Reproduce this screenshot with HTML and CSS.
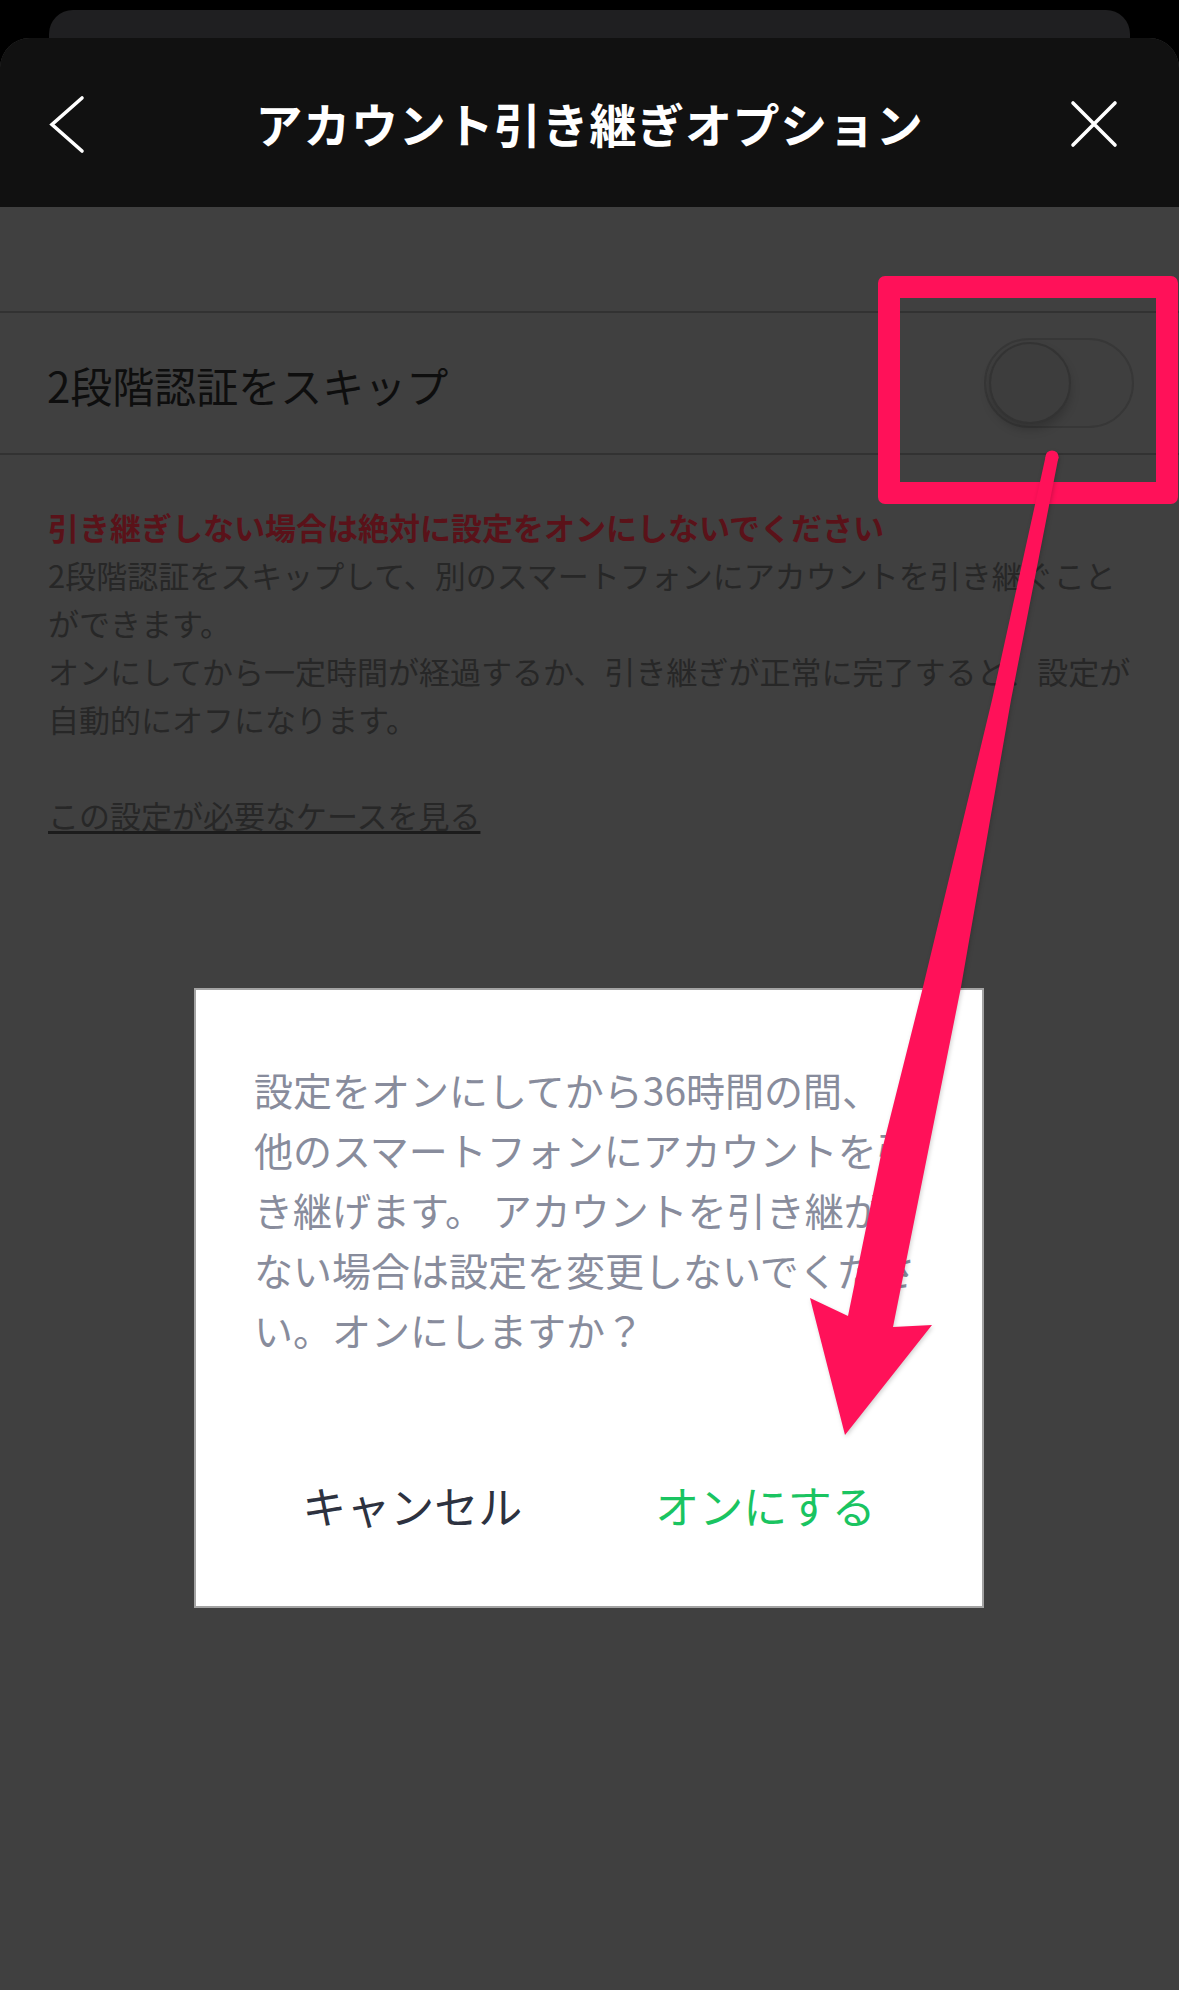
FILE: index.html
```html
<!DOCTYPE html>
<html lang="ja">
<head>
<meta charset="utf-8">
<title>アカウント引き継ぎオプション</title>
<link rel="stylesheet" href="styles.css">
</head>
<body>
  <div class="back-card"></div>

  <div class="sheet">
    <header class="nav">
      <button class="nav-btn nav-back" aria-label="戻る">
        <svg width="40" height="64" viewBox="0 0 40 64"><polyline points="34,6 4,32.5 34,59" fill="none" stroke="#fff" stroke-width="3.6" stroke-linecap="round" stroke-linejoin="miter"/></svg>
      </button>
      <h1 class="nav-title">アカウント引き継ぎオプション</h1>
      <button class="nav-btn nav-close" aria-label="閉じる">
        <svg width="50" height="50" viewBox="0 0 50 50"><path d="M4 4 L46 46 M46 4 L4 46" fill="none" stroke="#fff" stroke-width="3.6" stroke-linecap="round"/></svg>
      </button>
    </header>

    <main class="content">
      <div class="setting-row">
        <span class="setting-label">2段階認証をスキップ</span>
        <span class="switch"><span class="switch-knob"></span></span>
      </div>

      <div class="notes">
        <p class="notes-warn">引き継ぎしない場合は絶対に設定をオンにしないでください</p>
        <p class="notes-body">2段階認証をスキップして、別のスマートフォンにアカウントを引き継ぐこと<br>ができます。<br>オンにしてから一定時間が経過するか、引き継ぎが正常に完了すると、設定が<br>自動的にオフになります。</p>
        <a class="notes-link" href="#">この設定が必要なケースを見る</a>
      </div>
    </main>
  </div>

  <div class="dialog" role="dialog">
    <p class="dialog-text">設定をオンにしてから36時間の間、<br>他のスマートフォンにアカウントを引<br>き継げます。 アカウントを引き継が<br>ない場合は設定を変更しないでくださ<br>い。オンにしますか？</p>
    <div class="dialog-actions">
      <button class="dialog-btn dialog-cancel">キャンセル</button>
      <button class="dialog-btn dialog-ok">オンにする</button>
    </div>
  </div>

  <div class="callout-box"></div>
  <svg class="callout-arrow" width="1179" height="1990" viewBox="0 0 1179 1990">
    <circle cx="1052" cy="457" r="6.6" fill="#ff1159"/>
    <polygon fill="#ff1159" points="1045.5,457 992,700 923,987 882,1150 848,1316 810,1298 845,1435 932,1325 893,1327 961,987 1011,700 1058.5,457"/>
  </svg>
</body>
</html>
```

FILE: styles.css
```css
html, body {
  margin: 0;
  padding: 0;
}

body {
  position: relative;
  width: 1179px;
  height: 1990px;
  overflow: hidden;
  background: #000;
  font-family: "Noto Sans CJK JP", "Noto Sans", sans-serif;
}

p { margin: 0; }

/* stacked sheet peeking from behind */
.back-card {
  height: 28px;
  margin: 10px 49px 0;
  background: #1f1f21;
  border-radius: 24px 24px 0 0;
}

.sheet {
  height: 1952px;
  background: #404040;
  border-radius: 30px 30px 0 0;
  overflow: hidden;
}

/* navigation bar */
.nav {
  height: 169px;
  background: #111111;
  display: grid;
  grid-template-columns: 1fr auto 1fr;
  align-items: center;
  padding: 0 48px;
}

.nav-btn {
  border: 0;
  padding: 0;
  background: none;
  display: flex;
}

.nav-back { justify-self: start; margin-top: 2px; }
.nav-close { justify-self: end; margin: 3px 12px 0 0; }

.nav-title {
  margin: 0;
  color: #fff;
  font-size: 47px;
  font-weight: 700;
  line-height: 1;
  letter-spacing: 0.7px;
  white-space: nowrap;
}

/* settings */
.content {
  padding-top: 104px;
}

.setting-row {
  box-sizing: border-box;
  height: 144px;
  border-top: 2px solid #323232;
  border-bottom: 2px solid #323232;
  display: flex;
  align-items: center;
  justify-content: space-between;
  padding: 0 45px 0 47px;
}

.setting-label {
  font-size: 42px;
  color: #0e0e0e;
  margin-top: 2px;
}

.switch {
  box-sizing: border-box;
  width: 150px;
  height: 90px;
  border-radius: 45px;
  border: 2px solid #373737;
  background: #3f3f3f;
  display: flex;
  align-items: center;
  padding: 0 3px;
}

.switch-knob {
  box-sizing: border-box;
  width: 82px;
  height: 82px;
  border-radius: 50%;
  background: #3d3d3d;
  border: 2px solid #333;
  box-shadow: 0 6px 10px rgba(0, 0, 0, 0.18);
}

.notes {
  padding: 48px 48px 0;
  font-size: 31px;
  line-height: 48px;
  color: #272727;
}

.notes-warn {
  color: #5a1219;
  font-weight: 700;
}

.notes-body {
  white-space: nowrap;
}

.notes-link {
  display: inline-block;
  margin-top: 48px;
  color: #272727;
  text-decoration: underline;
  text-decoration-color: #1c1c1c;
  text-decoration-thickness: 3px;
  text-underline-offset: 3px;
}

/* confirmation dialog */
.dialog {
  position: absolute;
  left: 194px;
  top: 988px;
  box-sizing: border-box;
  width: 790px;
  height: 620px;
  background: #fff;
  border: 2px solid #a3a3a3;
  padding: 69px 40px 0 58px;
}

.dialog-text {
  font-size: 39px;
  line-height: 60px;
  color: #888c9c;
  white-space: nowrap;
}

.dialog-actions {
  margin: 96px 0 0 -58px;
  width: 786px;
  display: flex;
  justify-content: center;
  gap: 133px;
}

.dialog-btn {
  border: 0;
  background: none;
  padding: 0;
  font-family: inherit;
  font-size: 44px;
  line-height: 100px;
  height: 100px;
}

.dialog-cancel { color: #2d3240; }
.dialog-ok { color: #1ac461; }

/* annotation overlay */
.callout-box {
  position: absolute;
  left: 878px;
  top: 276px;
  box-sizing: border-box;
  width: 300px;
  height: 228px;
  border: 22px solid #ff1159;
  border-radius: 7px;
}

.callout-arrow {
  position: absolute;
  left: 0;
  top: 0;
  pointer-events: none;
  filter: drop-shadow(1px 2px 2px rgba(0, 0, 0, 0.18));
}
```
